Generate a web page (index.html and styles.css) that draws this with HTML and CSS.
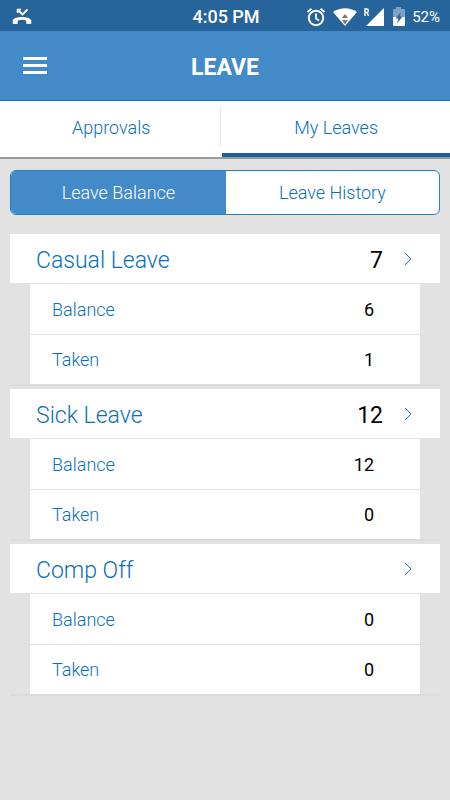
FILE: index.html
```html
<!DOCTYPE html>
<html lang="en">
<head>
<meta charset="utf-8">
<meta name="viewport" content="width=device-width, initial-scale=1">
<title>Leave</title>
<link rel="stylesheet" href="styles.css">
</head>
<body>
<div class="status">
  <svg class="status-call" width="20" height="18" viewBox="0 0 20 18" aria-hidden="true">
    <path d="M6 2L10.500 6.500L15.500 1.500M5.700 5V1.700H9" fill="none" stroke="#fff" stroke-width="1.800"/>
    <path d="M.7 15V12.200C3 8 17 8 19.300 12.200V15Q19.300 16 18.300 16H15.500Q14.300 16 14.200 15V12.500Q10 11 5.800 12.500V15Q5.700 16 4.500 16H1.700Q.7 16 .7 15Z" fill="#fff"/>
  </svg>
  <span class="status-time">4:05 PM</span>
  <div class="status-icons">
    <svg width="20" height="20" viewBox="0 0 20 20" aria-hidden="true">
      <circle cx="10" cy="11" r="7.200" fill="none" stroke="#fff" stroke-width="2"/>
      <path d="M1.500 5L5.500 1.700M18.500 5L14.500 1.700M10 6.500V11.500L13 13.500" fill="none" stroke="#fff" stroke-width="1.800"/>
    </svg>
    <svg width="26" height="20" viewBox="0 0 26 20" aria-hidden="true">
      <path d="M1 5Q13-2.500 25 5L13 19Z" fill="#fff"/>
      <path d="M10 11L13 7L16 11ZM10 13H16L13 17.500Z" fill="#777"/>
    </svg>
    <svg width="22" height="20" viewBox="0 0 22 20" aria-hidden="true">
      <path d="M2 19L20 1V19Z" fill="#fff"/>
      <path d="M1 9V2H3Q4.300 2 4.300 3.700T3 5.500H1M3 5.500L4.600 9" fill="none" stroke="#fff" stroke-width="1.500"/>
    </svg>
    <svg width="14" height="20" viewBox="0 0 14 20" aria-hidden="true">
      <path d="M1 10V3Q1 2 2 2H4V0H9V2H12Q13 2 13 3V10Z" fill="#7da2c4"/>
      <path d="M1 10H13V18Q13 19 12 19H2Q1 19 1 18Z" fill="#fff"/>
      <path d="M9 5L3.500 11.500H6.500L5 16.500L10.500 9.500H7.500Z" fill="#28649c"/>
    </svg>
    <span class="status-battery">52%</span>
  </div>
</div>
<header class="header">
  <button class="menu" type="button" aria-label="Menu"><span></span><span></span><span></span></button>
  <h1>LEAVE</h1>
</header>
<nav class="tabs">
  <a class="tab" href="#approvals">Approvals</a>
  <a class="tab tab-active" href="#leaves">My Leaves</a>
</nav>
<main class="content">
  <div class="segments">
    <button class="segment segment-active" type="button">Leave Balance</button>
    <button class="segment" type="button">Leave History</button>
  </div>
  <section class="group">
    <button class="group-head" type="button"><span>Casual Leave</span><span class="total">7</span>
      <svg width="8" height="14" viewBox="0 0 8 14" aria-hidden="true"><path d="M1 1L7 7L1 13"/></svg></button>
    <dl class="rows">
      <div class="row"><dt>Balance</dt><dd>6</dd></div>
      <div class="row"><dt>Taken</dt><dd>1</dd></div>
    </dl>
  </section>
  <section class="group">
    <button class="group-head" type="button"><span>Sick Leave</span><span class="total">12</span>
      <svg width="8" height="14" viewBox="0 0 8 14" aria-hidden="true"><path d="M1 1L7 7L1 13"/></svg></button>
    <dl class="rows">
      <div class="row"><dt>Balance</dt><dd>12</dd></div>
      <div class="row"><dt>Taken</dt><dd>0</dd></div>
    </dl>
  </section>
  <section class="group">
    <button class="group-head" type="button"><span>Comp Off</span><span class="total"></span>
      <svg width="8" height="14" viewBox="0 0 8 14" aria-hidden="true"><path d="M1 1L7 7L1 13"/></svg></button>
    <dl class="rows">
      <div class="row"><dt>Balance</dt><dd>0</dd></div>
      <div class="row"><dt>Taken</dt><dd>0</dd></div>
    </dl>
  </section>
</main>
</body>
</html>
```
FILE: styles.css
```css
* {
  box-sizing: border-box;
}

body {
  margin: 0;
  min-height: 100vh;
  background: #e2e2e2;
  color: #000;
  font: 18px/24px Roboto, sans-serif;
}

button {
  margin: 0;
  padding: 0;
  border: 0;
  background: none;
  color: inherit;
  font: inherit;
}

.status {
  display: grid;
  grid-template-columns: 1fr auto 1fr;
  align-items: center;
  height: 31px;
  padding: 2px 10px 0 12px;
  background: #28649c;
  color: #fff;
}

.status-time {
  font-weight: 500;
}

.status-icons {
  display: flex;
  justify-content: flex-end;
  align-items: center;
  gap: 6px;
}

.status-battery {
  font-size: 15px;
}

.header {
  display: grid;
  grid-template-columns: 24px 1fr 24px;
  align-items: center;
  height: 70px;
  padding: 0 23px;
  border-bottom: 1px solid #0c76bd;
  background: #438bc8;
  color: #fff;
}

.menu {
  display: grid;
  gap: 4px;
}

.menu span {
  height: 3px;
  background: #fff;
}

h1 {
  margin: 0;
  padding-top: 4px;
  font-size: 23px;
  font-weight: 700;
  line-height: 28px;
  text-align: center;
}

.tabs {
  display: grid;
  grid-template-columns: 49.4% 1fr;
  border-bottom: 2px solid #999;
  background: linear-gradient(#e5e5e5, #e5e5e5) 49.1% 6px / 1px 39px no-repeat #fff;
}

.tab {
  padding: 15px 0 13px;
  border-bottom: 4px solid transparent;
  color: #0870bc;
  font-weight: 300;
  text-align: center;
  text-decoration: none;
}

.tab-active {
  border-bottom-color: #1c609c;
}

.content {
  padding: 11px 10px;
}

.segments {
  display: grid;
  grid-template-columns: 50.2% 1fr;
  height: 45px;
  margin-bottom: 19px;
  overflow: hidden;
  border: 1px solid #2380c3;
  border-radius: 6px;
  background: #fff;
}

.segment {
  color: #0870bc;
  font-weight: 300;
}

.segment-active {
  background: #438bc8;
  color: #fff;
}

.group {
  margin-bottom: 3px;
  border-bottom: 2px solid #dcdcdc;
}

.group-head {
  display: grid;
  grid-template-columns: 1fr auto 8px;
  align-items: center;
  width: 100%;
  height: 50px;
  padding: 4px 28px 0 26px;
  border-bottom: 1px solid #e3e3e3;
  background: #fff;
  color: #0870bc;
  font-size: 23px;
  font-weight: 300;
  line-height: 28px;
  text-align: left;
}

.total {
  margin-right: 21px;
  color: #000;
  font-weight: 400;
}

.group-head svg {
  margin-bottom: 4px;
}

.group-head path {
  fill: none;
  stroke: #1479c0;
  stroke-width: 1;
}

.rows {
  margin: 0 20px;
  background: #fff;
}

.row {
  display: flex;
  justify-content: space-between;
  align-items: center;
  height: 50px;
  padding: 2px 46px 0 22px;
}

.row + .row {
  padding-top: 1px;
  border-top: 1px solid #e3e3e3;
}

dt {
  color: #0870bc;
  font-weight: 300;
}

dd {
  margin: 0;
}
```
